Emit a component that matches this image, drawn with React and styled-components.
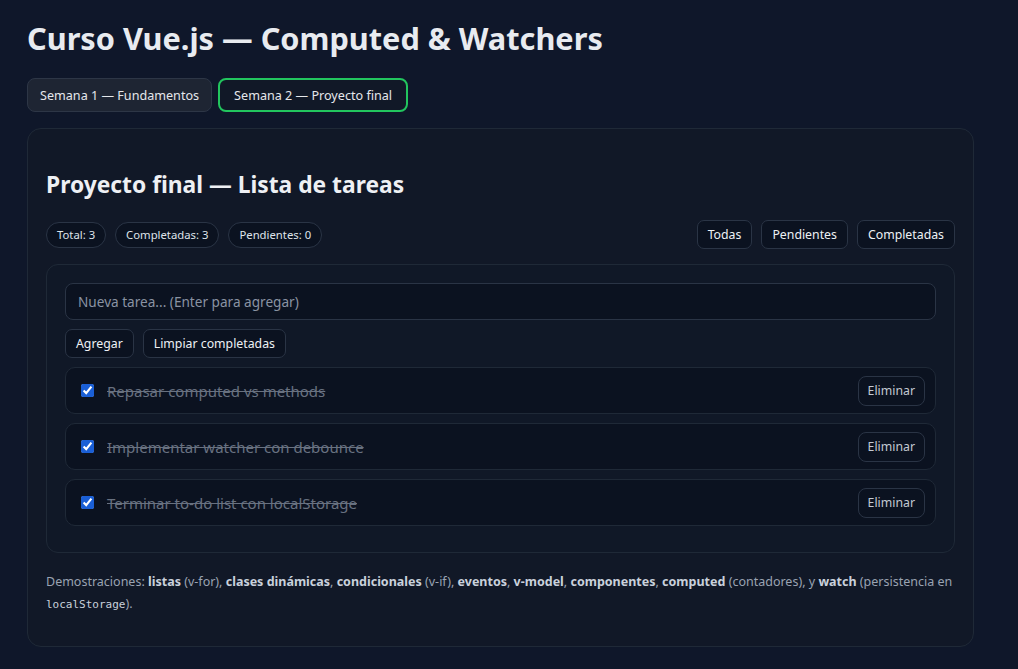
import { useState } from 'react';
import styled, { createGlobalStyle } from 'styled-components';

const GlobalStyle = createGlobalStyle`
  html, body {
    margin: 0;
    padding: 0;
    background: #0f172a;
    color: #e5e7eb;
    font-family: "Segoe UI", "Noto Sans", "Open Sans", sans-serif;
  }
  * { box-sizing: border-box; }
`;

const initialTasks = [
  { id: 1, text: 'Repasar computed vs methods', done: true },
  { id: 2, text: 'Implementar watcher con debounce', done: true },
  { id: 3, text: 'Terminar to-do list con localStorage', done: true },
];

export default function App() {
  const [week, setWeek] = useState(2);
  const [filter, setFilter] = useState('all');
  const [tasks, setTasks] = useState(initialTasks);
  const [draft, setDraft] = useState('');

  const completed = tasks.filter(t => t.done).length;
  const visible = tasks.filter(t =>
    filter === 'all' ? true : filter === 'done' ? t.done : !t.done
  );

  const addTask = () => {
    if (!draft.trim()) return;
    setTasks([...tasks, { id: Date.now(), text: draft.trim(), done: false }]);
    setDraft('');
  };

  const toggle = (id) => {
    setTasks(tasks.map(t => (t.id === id ? { ...t, done: !t.done } : t)));
  };

  return (
    <Page>
      <GlobalStyle />
      <Title>Curso Vue.js — Computed &amp; Watchers</Title>
      <Tabs>
        <Tab $active={week === 1} onClick={() => setWeek(1)}>Semana 1 — Fundamentos</Tab>
        <Tab $active={week === 2} onClick={() => setWeek(2)}>Semana 2 — Proyecto final</Tab>
      </Tabs>

      <Card>
        <Heading>Proyecto final — Lista de tareas</Heading>
        <Toolbar>
          <Stats>
            <Pill>Total: {tasks.length}</Pill>
            <Pill>Completadas: {completed}</Pill>
            <Pill>Pendientes: {tasks.length - completed}</Pill>
          </Stats>
          <Filters>
            <Button onClick={() => setFilter('all')}>Todas</Button>
            <Button onClick={() => setFilter('pending')}>Pendientes</Button>
            <Button onClick={() => setFilter('done')}>Completadas</Button>
          </Filters>
        </Toolbar>

        <Panel>
          <Input
            placeholder="Nueva tarea... (Enter para agregar)"
            value={draft}
            onChange={e => setDraft(e.target.value)}
            onKeyDown={e => e.key === 'Enter' && addTask()}
          />
          <Actions>
            <Button onClick={addTask}>Agregar</Button>
            <Button onClick={() => setTasks(tasks.filter(t => !t.done))}>Limpiar completadas</Button>
          </Actions>
          <TaskList>
            {visible.map(task => (
              <TaskRow key={task.id}>
                <Check type="checkbox" checked={task.done} onChange={() => toggle(task.id)} />
                <TaskText $done={task.done}>{task.text}</TaskText>
                <DeleteButton onClick={() => setTasks(tasks.filter(t => t.id !== task.id))}>
                  Eliminar
                </DeleteButton>
              </TaskRow>
            ))}
          </TaskList>
        </Panel>

        <Footer>
          Demostraciones: <b>listas</b> (v-for), <b>clases dinámicas</b>, <b>condicionales</b> (v-if),{' '}
          <b>eventos</b>, <b>v-model</b>, <b>componentes</b>, <b>computed</b> (contadores), y{' '}
          <b>watch</b> (persistencia en <code>localStorage</code>).
        </Footer>
      </Card>
    </Page>
  );
}

const Page = styled.div`
  width: 974px;
  padding: 0 0 24px 27px;
`;

const Title = styled.h1`
  margin: 0;
  padding-top: 17px;
  font-size: 30.7px;
  line-height: 42px;
  font-weight: 700;
  color: #e8ebf0;
`;

const Tabs = styled.div`
  display: flex;
  gap: 6px;
  margin-top: 19px;
`;

const Tab = styled.button`
  height: 34px;
  padding: 0 ${p => (p.$active ? '14px' : '12px')};
  border-radius: 8px;
  font: inherit;
  font-size: 12.6px;
  color: #e5e7eb;
  background: ${p => (p.$active ? '#111827' : '#1e2533')};
  border: ${p => (p.$active ? '2px solid #22c55e' : '1px solid #2d3646')};
  cursor: pointer;
`;

const Card = styled.section`
  margin-top: 16px;
  background: #111827;
  border: 1px solid #1f2937;
  border-radius: 14px;
  padding: 22px 18px 30px;
`;

const Heading = styled.h2`
  margin: 0;
  padding-top: 20px;
  font-size: 22.8px;
  line-height: 28px;
  font-weight: 700;
  color: #eef0f4;
`;

const Toolbar = styled.div`
  display: flex;
  align-items: center;
  justify-content: space-between;
  margin-top: 21px;
`;

const Stats = styled.div`
  display: flex;
  gap: 9px;
`;

const Pill = styled.span`
  display: inline-flex;
  align-items: center;
  height: 26px;
  padding: 0 10px;
  border-radius: 999px;
  border: 1px solid #2a3445;
  background: #0b1220;
  font-size: 11.3px;
  color: #dfe3ea;
`;

const Filters = styled.div`
  display: flex;
  gap: 9px;
`;

const Button = styled.button`
  height: 29px;
  padding: 0 10px;
  border-radius: 7px;
  border: 1px solid #2a3445;
  background: #0b1220;
  color: #eef1f5;
  font: inherit;
  font-size: 12.3px;
  cursor: pointer;

  &:hover {
    background: #162033;
  }
`;

const Panel = styled.div`
  margin-top: 15px;
  border: 1px solid #1f2937;
  border-radius: 12px;
  background: #101827;
  padding: 18px 18px 26px;
  display: flex;
  flex-direction: column;
  gap: 9px;
`;

const Input = styled.input`
  height: 37px;
  padding: 0 12px;
  border-radius: 8px;
  border: 1px solid #2a3445;
  background: #0b1220;
  color: #e5e7eb;
  font: inherit;
  font-size: 13.6px;
  outline: none;

  &::placeholder {
    color: #8a93a3;
  }
`;

const Actions = styled.div`
  display: flex;
  gap: 9px;
`;

const TaskList = styled.div`
  display: flex;
  flex-direction: column;
  gap: 9px;
`;

const TaskRow = styled.div`
  display: flex;
  align-items: center;
  gap: 13px;
  height: 47px;
  padding: 0 10px 0 15px;
  border: 1px solid #1f2937;
  border-radius: 10px;
  background: #0b1220;
`;

const Check = styled.input`
  width: 13px;
  height: 13px;
  margin: 0;
  accent-color: #1a5fd6;
`;

const TaskText = styled.span`
  flex: 1;
  font-size: 15px;
  color: ${p => (p.$done ? '#687180' : '#e5e7eb')};
  text-decoration: ${p => (p.$done ? 'line-through' : 'none')};
`;

const DeleteButton = styled(Button)`
  height: 30px;
  padding: 0 9px;
  border-radius: 8px;
  color: #c3c9d2;
`;

const Footer = styled.p`
  margin: 18px 0 0;
  font-size: 12.5px;
  line-height: 22px;
  color: #9aa3b2;

  b {
    color: #c9d1dc;
    font-weight: 700;
  }

  code {
    font-family: "DejaVu Sans Mono", "Liberation Mono", monospace;
    font-size: 11px;
    color: #c9d1dc;
  }
`;
